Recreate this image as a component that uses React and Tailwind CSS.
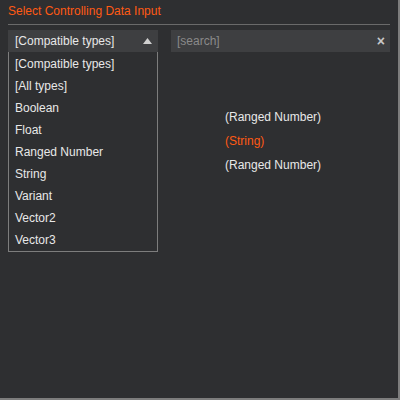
export default function App() {
  const items = ['[Compatible types]', '[All types]', 'Boolean', 'Float', 'Ranged Number', 'String', 'Variant', 'Vector2', 'Vector3'];

  return (
    <div className="w-[400px] h-[400px] bg-[#2e2f31] border-r-2 border-b-2 border-[#7d7d7d] text-[12px] text-[#e8e8e8]" style={{ fontFamily: '"Liberation Sans", Arial, sans-serif' }}>
      <div className="px-2 pt-[2px]">
        <div className="text-[#ff5a14] leading-[18px] pb-[4px] border-b border-[#6a6a6a]">Select Controlling Data Input</div>

        <div className="flex gap-[13px] mt-[5px]">
          {/* Tipo */}
          <div className="w-[150px]">
            <div className="h-[22px] bg-[#3e3f41] flex items-center justify-between pl-[7px] pr-[6px]">
              <span>[Compatible types]</span>
              <svg width="9" height="6" viewBox="0 0 9 6"><path d="M4.5 0 L9 6 L0 6 Z" fill="#d0d0d0" /></svg>
            </div>
            <div className="border border-[#7d7d7d] border-t-0 pt-[1px]">
              {items.map(it => (
                <div key={it} className="h-[22px] leading-[22px] pl-[6px]">{it}</div>
              ))}
            </div>
          </div>

          {/* Busqueda */}
          <div className="flex-1">
            <div className="h-[22px] bg-[#3e3f41] flex items-center justify-between pl-[6px] pr-[5px]">
              <span className="text-[#8a8a8a]">[search]</span>
              <span className="text-[#c8c8c8] text-[14px] font-bold leading-none">×</span>
            </div>
            <div className="pl-[54px] mt-[56px] flex flex-col gap-[6px] leading-[18px]">
              <div>(Ranged Number)</div>
              <div className="text-[#ff5a14]">(String)</div>
              <div>(Ranged Number)</div>
            </div>
          </div>
        </div>
      </div>
    </div>
  );
}
